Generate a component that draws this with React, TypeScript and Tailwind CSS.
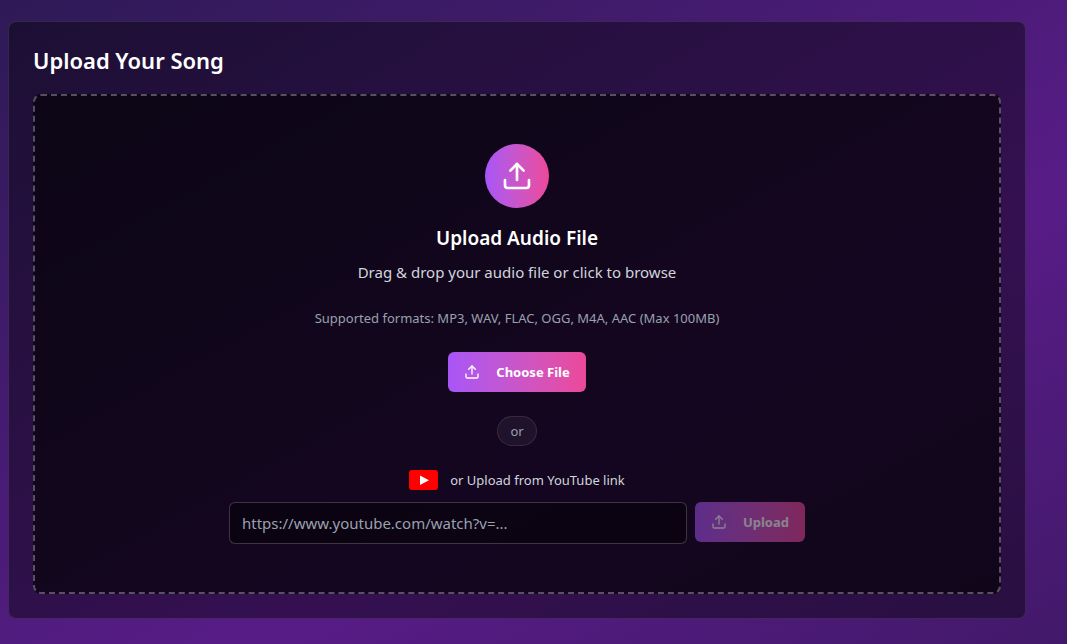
import React, { useState } from 'react';
import { Upload } from 'lucide-react';

const YouTubeIcon = () => (
  <svg width="29" height="20" viewBox="0 0 29 20" aria-hidden="true">
    <rect width="29" height="20" rx="3" fill="#ff0000" />
    <path d="M11 5.5v9.5l9-4.75z" fill="#ffffff" />
  </svg>
);

interface ActionButtonProps {
  label: string;
  disabled?: boolean;
}

const ActionButton: React.FC<ActionButtonProps> = ({ label, disabled }) => (
  <button
    type="button"
    disabled={disabled}
    className="inline-flex h-10 shrink-0 items-center gap-4 rounded-md bg-linear-to-r from-[#a855f7] to-[#ec4899] px-4 text-[13px]/5 font-bold text-white disabled:opacity-50"
  >
    <Upload size={16} />
    {label}
  </button>
);

const UploadSong = () => {
  const [url, setUrl] = useState('');

  return (
    <section className="rounded-lg border border-white/10 bg-black/40 p-6">
      <h2 className="mb-5 text-[22px]/7 font-semibold text-white">Upload Your Song</h2>
      <div className="flex flex-col items-center rounded-lg border-2 border-dashed border-white/30 bg-black/60 p-12 text-center">
        <div className="flex size-16 items-center justify-center rounded-full bg-linear-to-r from-[#a855f7] to-[#ec4899]">
          <Upload size={32} className="text-white" />
        </div>
        <h3 className="mt-4 text-[19px]/7 font-semibold text-white">Upload Audio File</h3>
        <p className="mt-2 text-[15px]/6 text-gray-300">
          Drag &amp; drop your audio file or click to browse
        </p>
        <p className="mt-6 mb-6 text-[13px]/5 text-gray-400">
          Supported formats: MP3, WAV, FLAC, OGG, M4A, AAC (Max 100MB)
        </p>
        <ActionButton label="Choose File" />
        <span className="mt-6 rounded-full border border-white/10 bg-white/5 px-3 py-1 text-[13px]/5 text-gray-400">
          or
        </span>
        <div className="mt-6 w-full max-w-xl">
          <label
            htmlFor="youtube-url"
            className="flex items-center justify-center gap-3 text-[13px]/5 text-gray-300"
          >
            <YouTubeIcon />
            or Upload from YouTube link
          </label>
          <div className="mt-3 flex gap-2">
            <input
              id="youtube-url"
              type="url"
              value={url}
              onChange={(e) => setUrl(e.target.value)}
              placeholder="https://www.youtube.com/watch?v=..."
              className="min-w-0 flex-1 rounded-md border border-white/20 bg-black/40 px-3 py-2 text-[15px]/6 text-white placeholder:text-gray-400"
            />
            <ActionButton label="Upload" disabled={!url} />
          </div>
        </div>
      </div>
    </section>
  );
};

const App = () => (
  <main className="min-h-screen bg-[linear-gradient(151deg,#2e1a56_0%,#581c87_63%,#42196a_100%)] pt-[21px] pr-[41px] pb-6 pl-2 font-['Noto_Sans',sans-serif]">
    <UploadSong />
  </main>
);

export default App;
